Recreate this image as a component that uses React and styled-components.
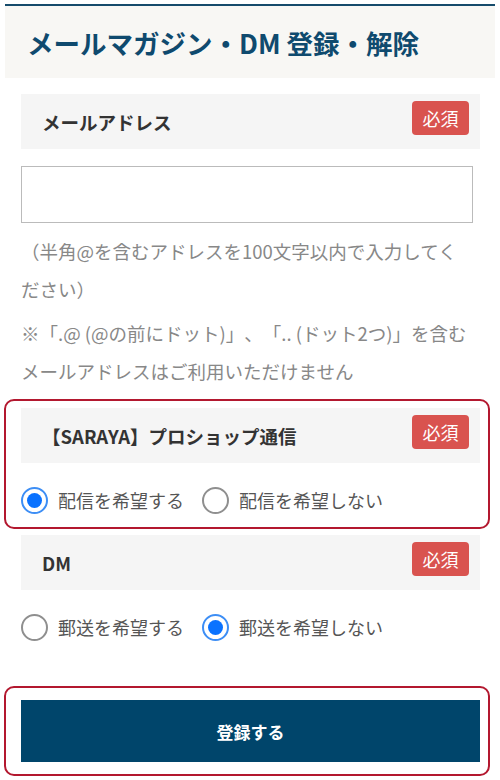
import React from "react";
import styled, { createGlobalStyle } from "styled-components";

const GlobalStyle = createGlobalStyle`
  body {
    margin: 0;
    background: #fff;
    font-family: "Noto Sans CJK JP", "Noto Sans", sans-serif;
    text-spacing-trim: space-all;
  }
`;

const Page = styled.div`
  width: 500px;
  min-height: 780px;
  box-sizing: border-box;
  padding: 4px 0 17px;
`;

const Header = styled.div`
  margin: 0 5px;
  height: 72px;
  border-top: 2px solid #164b6b;
  background: #f8f7f4;
  display: flex;
  align-items: center;
  padding-left: 22px;
`;

const Title = styled.h1`
  margin: 0;
  font-size: 26.5px;
  font-weight: 700;
  color: #0f4a6e;
`;

const Form = styled.div`
  padding: 0 20px 0 21px;
  display: flex;
  flex-direction: column;
`;

const Field = styled.div`
  position: relative;
  margin-top: ${(p) => p.$top}px;
`;

const Highlight = styled.div`
  position: relative;
  margin-top: ${(p) => p.$top}px;

  &::after {
    content: "";
    position: absolute;
    top: -${(p) => p.$pad}px;
    bottom: -${(p) => p.$pad}px;
    left: -17px;
    right: -10px;
    border: 2px solid #b3182f;
    border-radius: 10px;
    pointer-events: none;
  }
`;

const LabelBar = styled.div`
  height: 55px;
  box-sizing: border-box;
  background: #f5f5f5;
  display: flex;
  align-items: center;
  justify-content: space-between;
  padding: 0 11px 0 21px;
`;

const Label = styled.span`
  font-size: 18.5px;
  font-weight: 700;
  color: #333;
`;

const Badge = styled.span`
  align-self: flex-start;
  margin-top: 7px;
  width: 57px;
  height: 34px;
  border-radius: 4px;
  background: #d9534f;
  color: #fff;
  font-size: 18px;
  display: flex;
  align-items: center;
  justify-content: center;
`;

const TextInput = styled.input`
  display: block;
  margin-top: 17px;
  width: 452px;
  height: 57px;
  box-sizing: border-box;
  border: 1px solid #bbb;
  background: #fff;
  outline: none;
`;

const Help = styled.p`
  margin: ${(p) => p.$top}px 0 0;
  width: 452px;
  font-size: 18.5px;
  line-height: 38px;
  color: #888;
`;

const RadioRow = styled.div`
  display: flex;
  align-items: center;
  gap: 18px;
  height: 40px;
  margin-top: 17px;
`;

const Option = styled.label`
  display: flex;
  align-items: center;
  gap: 10px;
  font-size: 18px;
  color: #555;
  cursor: pointer;
`;

const Circle = styled.span`
  width: 27px;
  height: 27px;
  box-sizing: border-box;
  border-radius: 50%;
  border: 2px solid ${(p) => (p.$on ? "#3d8ef5" : "#8f8f8f")};
  background: #fff;
  display: flex;
  align-items: center;
  justify-content: center;

  &::after {
    content: "";
    width: 15px;
    height: 15px;
    border-radius: 50%;
    background: ${(p) => (p.$on ? "#0a72ff" : "transparent")};
  }
`;

const Submit = styled.button`
  display: block;
  width: 100%;
  height: 62px;
  border: none;
  background: #00456b;
  color: #fff;
  font-family: inherit;
  font-size: 17px;
  font-weight: 700;
  cursor: pointer;
`;

function Radio({ on, children }) {
  return (
    <Option>
      <Circle $on={on} />
      {children}
    </Option>
  );
}

function LabelHead({ children }) {
  return (
    <LabelBar>
      <Label>{children}</Label>
      <Badge>必須</Badge>
    </LabelBar>
  );
}

export default function App() {
  return (
    <Page>
      <GlobalStyle />
      <Header>
        <Title>メールマガジン・DM 登録・解除</Title>
      </Header>
      <Form>
        <Field $top={16}>
          <LabelHead>メールアドレス</LabelHead>
          <TextInput type="text" />
          <Help $top={9}>（半角@を含むアドレスを100文字以内で入力してください）</Help>
          <Help $top={6}>
            ※「.@ (@の前にドット)」、「.. (ドット2つ)」を含むメールアドレスはご利用いただけません
          </Help>
        </Field>

        <Highlight $top={18} $pad={9}>
          <LabelHead>【SARAYA】プロショップ通信</LabelHead>
          <RadioRow>
            <Radio on>配信を希望する</Radio>
            <Radio>配信を希望しない</Radio>
          </RadioRow>
        </Highlight>

        <Field $top={15}>
          <LabelHead>DM</LabelHead>
          <RadioRow>
            <Radio>郵送を希望する</Radio>
            <Radio on>郵送を希望しない</Radio>
          </RadioRow>
        </Field>

        <Highlight $top={53} $pad={14}>
          <Submit type="button">登録する</Submit>
        </Highlight>
      </Form>
    </Page>
  );
}
